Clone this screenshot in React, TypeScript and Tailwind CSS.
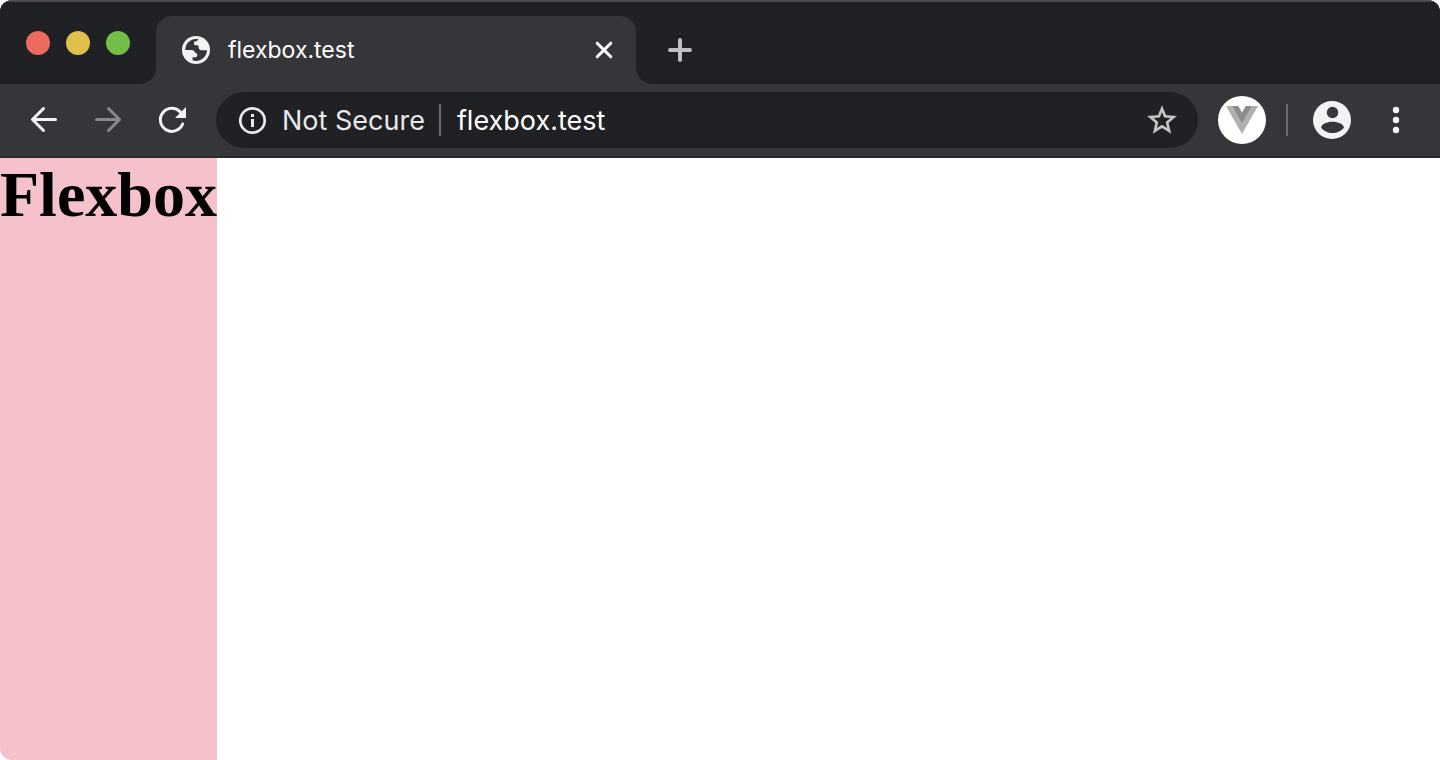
import type { ReactNode } from "react";

function IconButton({ label, className = "", children }: { label: string; className?: string; children: ReactNode }) {
  return (
    <button type="button" aria-label={label} className={`flex shrink-0 items-center justify-center ${className}`}>
      {children}
    </button>
  );
}

function GlobeIcon() {
  return (
    <svg viewBox="0 0 28 28" className="size-7 shrink-0" aria-hidden="true">
      <circle cx="14" cy="14" r="14" fill="#f1f3f4" />
      <path
        d="M3.300 14C3.200 8 7.800 3.200 13.800 3.100H16.300C16 4.800 14.800 5.400 13 5.600C12 5.800 11.900 6.500 12 7.500C12 8.600 12.300 9.200 13.500 9.200H15.500C16.300 9.200 16.600 9.800 16.600 10.800C16.700 13 17.600 14.300 19.500 14.300H24.900C24.800 20.200 20.200 24.900 14.200 24.900C12.800 24.900 11.600 24.700 10.500 24.300V21.300H12.500C14.200 21.300 15.300 20.500 15.300 19C15.300 17.700 14.700 17.100 13.400 17C12.600 15 11.400 14 9 14Z"
        fill="#35363a"
      />
    </svg>
  );
}

function TrafficLights() {
  return (
    <div className="flex h-full w-39 shrink-0 items-start gap-4 rounded-br-2xl bg-[#202124] pt-[29px] pl-[26px]">
      <button type="button" aria-label="Close window" className="size-6 rounded-full bg-[#ed6a5e]" />
      <button type="button" aria-label="Minimize window" className="size-6 rounded-full bg-[#e0c04c]" />
      <button type="button" aria-label="Zoom window" className="size-6 rounded-full bg-[#72be47]" />
    </div>
  );
}

function TabStrip() {
  return (
    <div className="flex h-[84px] border-t-2 border-[#4a4b4d] bg-[#35363a]">
      <TrafficLights />
      <div className="w-full max-w-120 bg-[#202124] pt-3.5">
        <div className="flex h-full items-center rounded-t-2xl bg-[#35363a] pr-5 pl-[26px]">
          <GlobeIcon />
          <span className="ml-[18px] flex-1 text-[23px] leading-7 text-white">flexbox.test</span>
          <IconButton label="Close tab" className="size-6">
            <svg viewBox="0 0 24 24" className="size-6" fill="none" stroke="#ffffff" strokeWidth="3" strokeLinecap="round">
              <path d="M5.200 5.200 18.800 18.800M18.800 5.200 5.200 18.800" />
            </svg>
          </IconButton>
        </div>
      </div>
      <div className="flex flex-1 items-center rounded-bl-2xl bg-[#202124] pt-3.5 pl-8">
        <IconButton label="New tab" className="size-6">
          <svg viewBox="0 0 24 24" className="size-6" fill="none" stroke="#bdc1c6" strokeWidth="4" strokeLinecap="round">
            <path d="M12 2V22M2 12H22" />
          </svg>
        </IconButton>
      </div>
    </div>
  );
}

function AddressBar() {
  return (
    <div className="flex h-14 flex-1 items-center rounded-full bg-[#202124] pr-5 pl-[22px]">
      <button type="button" className="flex shrink-0 items-center gap-4 text-[27px] leading-8 text-[#e8e8e8]">
        <svg viewBox="0 0 28 28" className="size-7" fill="none" aria-hidden="true">
          <circle cx="14.500" cy="14.500" r="12.200" stroke="#e8eaed" strokeWidth="2.700" />
          <path d="M13 8h3v3h-3zM13 13h3v8h-3z" fill="#e8eaed" />
        </svg>
        <span className="pt-0.5">Not Secure</span>
      </button>
      <span className="ml-3.5 h-8 w-0.5 shrink-0 bg-[#6b6c6f]" />
      <input
        type="text"
        aria-label="Address"
        defaultValue="flexbox.test"
        className="ml-4 min-w-0 flex-1 bg-transparent pt-0.5 text-[27px] leading-8 text-white outline-none"
      />
      <IconButton label="Bookmark this page" className="size-8">
        <svg viewBox="0 0 32 32" className="size-8" fill="none" stroke="#c4c4c4" strokeWidth="2.700">
          <path d="M16 4.800 19.100 12.300 27.500 13 21.200 18.500 23.100 26.800 16 22.400 8.900 26.800 10.800 18.500 4.500 13 12.900 12.300Z" />
        </svg>
      </IconButton>
    </div>
  );
}

function Toolbar() {
  return (
    <div className="flex h-[74px] items-center border-b-2 border-[#28292b] bg-[#35363a] pr-7 pl-7">
      <div className="mr-7 flex gap-8">
        <IconButton label="Back" className="size-8">
          <svg viewBox="0 0 32 32" className="size-8" fill="none" stroke="#f1f3f4" strokeWidth="3" strokeLinecap="round" strokeLinejoin="round">
            <path d="M27.500 15.500H4.500M15.500 4.500 4.500 15.500 15.500 26.500" />
          </svg>
        </IconButton>
        <IconButton label="Forward" className="size-8">
          <svg viewBox="0 0 32 32" className="size-8" fill="none" stroke="#87888a" strokeWidth="3" strokeLinecap="round" strokeLinejoin="round">
            <path d="M4.500 15.500H27.500M16.500 4.500 27.500 15.500 16.500 26.500" />
          </svg>
        </IconButton>
        <IconButton label="Reload" className="size-8">
          <svg viewBox="0 0 32 32" className="size-8" fill="none">
            <path d="M26.600 20A11.500 11.500 0 1 1 24.200 7.900" stroke="#f1f3f4" strokeWidth="3" strokeLinecap="round" />
            <path d="M30 3V14H19Z" fill="#f1f3f4" />
          </svg>
        </IconButton>
      </div>
      <AddressBar />
      <IconButton label="Vue.js devtools" className="ml-5 size-12 rounded-full bg-white">
        <svg viewBox="0 0 48 48" className="size-12">
          <path d="M8 10H17.500L24 21.300 30.500 10H40L24 38Z" fill="#b0b0b0" />
          <path d="M14.300 10H20.300L24 16.500 27.700 10H33.700L24 27Z" fill="#8c8c8c" />
        </svg>
      </IconButton>
      <span className="mx-5 h-8 w-0.5 shrink-0 bg-[#6b6c6f]" />
      <IconButton label="Profile" className="ml-1 size-10">
        <svg viewBox="0 0 40 40" className="size-10">
          <circle cx="20" cy="20" r="19" fill="#f1f3f4" />
          <circle cx="20.500" cy="12.500" r="5.700" fill="#35363a" />
          <path d="M9 27.500C10 24 15 21.800 20.500 21.800S31 24 32 27.500C29.500 31 25 33 20.500 33S11.500 31 9 27.500Z" fill="#35363a" />
        </svg>
      </IconButton>
      <IconButton label="Menu" className="ml-7 size-8">
        <svg viewBox="0 0 32 32" className="size-8" fill="#f1f3f4">
          <circle cx="16" cy="6" r="3.200" />
          <circle cx="16" cy="16" r="3.200" />
          <circle cx="16" cy="26" r="3.200" />
        </svg>
      </IconButton>
    </div>
  );
}

export default function App() {
  return (
    <div className="min-h-screen bg-white">
      <div className="flex min-h-screen flex-col overflow-hidden rounded-xl bg-white">
        <header className="font-[Inter,sans-serif]">
          <TabStrip />
          <Toolbar />
        </header>
        <main className="flex flex-1">
          <div className="bg-[#f5c2cb]">
            <h1 className="font-['Liberation_Serif',serif] text-[64px] leading-[74px] font-bold text-black">Flexbox</h1>
          </div>
        </main>
      </div>
    </div>
  );
}
